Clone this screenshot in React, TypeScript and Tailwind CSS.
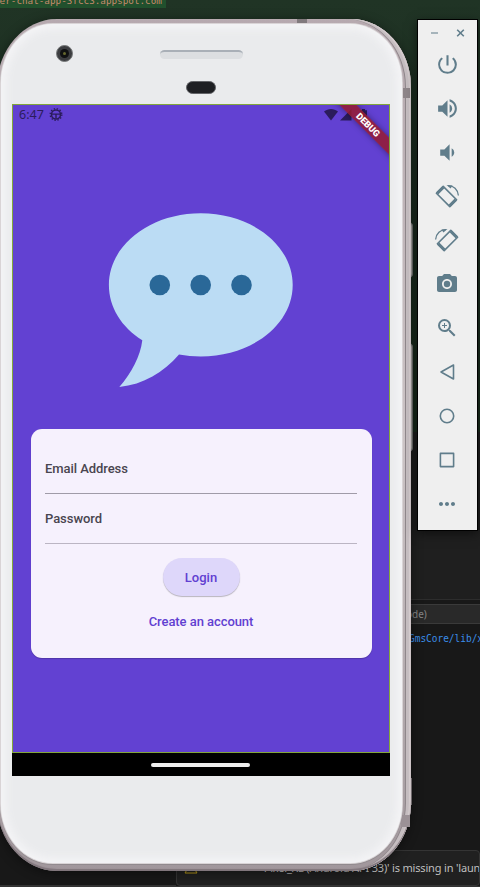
import React from "react";
import {
  MdPowerSettingsNew,
  MdVolumeUp,
  MdVolumeDown,
  MdPhotoCamera,
  MdZoomIn,
  MdMoreHoriz,
} from "react-icons/md";

function RotateIcon({ flip = false }: { flip?: boolean }) {
  return (
    <svg width="26" height="26" viewBox="-1 -1 26 26" className={flip ? "-scale-x-100" : ""}>
      <g fill="none" stroke="currentColor">
        <path d="M8.2 2.4 21.6 15.800 14.800 22.600 1.400 9.200z" strokeWidth="1.6" strokeLinejoin="round" />
        <path d="M2.200 9.400 8.400 3.200M14.600 21.800 20.800 15.600" strokeWidth="3" />
        <path d="M13 1.700C18.600 1.700 22.800 5.500 23.400 11.500" strokeWidth="1.300" />
      </g>
      <path d="M11.500.9 17.500 1.600 15.600 4.500z" fill="currentColor" />
    </svg>
  );
}

function NavShape({ d }: { d: string }) {
  return (
    <svg width="24" height="24" viewBox="0 0 24 24" fill="none" stroke="currentColor" strokeWidth="1.6" strokeLinejoin="round">
      <path d={d} />
    </svg>
  );
}

function Toolbar() {
  const tools = [
    <MdPowerSettingsNew size={25} />,
    <MdVolumeUp size={25} />,
    <MdVolumeDown size={25} />,
    <RotateIcon />,
    <RotateIcon flip />,
    <MdPhotoCamera size={24} />,
    <MdZoomIn size={24} />,
    <NavShape d="M18.500 5v14L6 12z" />,
    <NavShape d="M5.300 12a6.700 6.700 0 1 0 13.400 0a6.700 6.700 0 1 0-13.400 0z" />,
    <NavShape d="M5.400 5.400h13.200v13.200H5.400z" />,
    <MdMoreHoriz size={24} />,
  ];
  return (
    <aside className="absolute left-[417px] top-[19px] flex h-[512px] w-[61px] flex-col border border-black bg-[#efefef] pr-px text-[#607d8b] shadow-[0_3px_10px_rgba(0,0,0,0.5)]">
      <div className="flex h-[22px] items-end justify-center gap-[17px] pb-[3px]">
        <svg width="9" height="12" viewBox="0 0 9 12" className="opacity-60">
          <path d="M1 6h7" stroke="currentColor" strokeWidth="1.7" />
        </svg>
        <svg width="9" height="12" viewBox="0 0 9 12">
          <path d="m1.200 2.700 6.600 6.600M7.800 2.700 1.200 9.300" stroke="currentColor" strokeWidth="1.600" />
        </svg>
      </div>
      {tools.map((tool, i) => (
        <div key={i} className="flex h-11 shrink-0 items-center justify-center">
          {tool}
        </div>
      ))}
    </aside>
  );
}

function StatusBar() {
  return (
    <div className="flex h-[20px] items-center justify-between pl-[6px] pr-[20px] text-[#2b1c5c]">
      <div className="flex items-center gap-[5px]">
        <span className="font-['Noto_Sans',sans-serif] text-[12.5px] leading-[16px]">6:47</span>
        <svg width="14" height="14" viewBox="0 0 14 14" fill="none" stroke="currentColor">
          <circle cx="7" cy="6.500" r="4.500" strokeWidth="1.500" />
          <circle cx="7" cy="6.500" r="5.800" strokeWidth="1.400" strokeDasharray="1.4 1.637" />
          <path d="M2.700 6.100h8.600M7 6.500v4" strokeWidth="1.400" />
        </svg>
      </div>
      <div className="flex items-center gap-[2px]">
        <svg width="14" height="12" viewBox="0 0 14 12" fill="currentColor">
          <path d="M0 2.600C4-.8 10-.8 14 2.600L7 11.400z" />
        </svg>
        <svg width="12" height="12" viewBox="0 0 12 12" fill="currentColor">
          <path d="M11.500 0v11.500H0z" />
        </svg>
        <svg width="15" height="12" viewBox="0 0 15 12" fill="currentColor">
          <path d="M6 1.200h2V0h3v1.200h2V12H6z" />
        </svg>
      </div>
    </div>
  );
}

function Field({ label, line }: { label: string; line: string }) {
  return (
    <div className={`flex h-[50.5px] items-start border-b ${line}`}>
      <span className="pt-[16.5px] text-[13px] font-medium leading-[18px] tracking-[-0.06px] text-[#49454f]">{label}</span>
    </div>
  );
}

function ChatBubble() {
  return (
    <svg width="186" height="176" viewBox="108 212 186 176" className="mt-[87px] shrink-0">
      <path
        d="M200.8 213.3C251.7 213.3 292.7 245.3 292.7 284.9C292.7 324.5 251.7 356.4 200.8 356.4C193.2 356.4 186 355.8 179 354.5C163.5 372.5 143.5 384.5 119.3 387C131.5 373 140.5 356 142.3 340.2C121.5 327 108.9 307.2 108.9 284.9C108.9 245.3 150 213.3 200.8 213.3Z"
        fill="#bbdcf4"
      />
      <g fill="#2a6898">
        <circle cx="159.8" cy="285" r="10.3" />
        <circle cx="200.7" cy="285" r="10.3" />
        <circle cx="241.5" cy="285" r="10.3" />
      </g>
    </svg>
  );
}

function Screen() {
  return (
    <div className="relative flex h-[649px] w-[378px] flex-col overflow-hidden border border-[#83a63c] bg-[#6241d2] font-['Roboto',sans-serif]">
      <StatusBar />
      <div className="flex flex-col items-center">
        <ChatBubble />
        <form className="mt-[41px] flex h-[228.5px] w-[341px] flex-col rounded-[11px] bg-[#f6f1fd] px-[14.5px] pt-[14px] shadow-[0_1px_1px_rgba(0,0,0,0.2)]">
          <Field label="Email Address" line="border-[#a09ba8]" />
          <Field label="Password" line="border-[#bbb5c3]" />
          <div className="mt-[14px] flex flex-col items-center">
            <button type="button" className="h-[38px] w-[77px] rounded-full bg-[#ded7fa] pt-px text-[13px] font-medium text-[#6140d1] shadow-[0_1px_1px_rgba(0,0,0,0.25)]">
              Login
            </button>
            <button type="button" className="mt-[16.5px] text-[13px] font-medium leading-[18px] tracking-[-0.06px] text-[#6140d1]">
              Create an account
            </button>
          </div>
        </form>
      </div>
      <div className="absolute -right-[34px] top-[14px] flex h-[12px] w-[110px] rotate-45 items-center justify-center bg-[#961b30]/85 text-[9.2px] font-black text-white shadow-[0_0_6px_rgba(0,0,0,0.4)]">
        DEBUG
      </div>
    </div>
  );
}

function Phone() {
  return (
    <div className="absolute -left-[3px] top-[19px] h-[852px] w-[414px]">
      <div className="absolute right-[-2px] top-[203px] h-[56px] w-[5px] rounded-r border border-[#777] bg-[#b9b7b4]" />
      <div className="absolute right-[-2px] top-[324px] h-[109px] w-[5px] rounded-r border border-[#777] bg-[#b9b7b4]" />
      <div className="absolute right-[-1px] top-[759px] h-[27px] w-[3px] bg-[#8c8589]" />
      <div className="relative h-full rounded-[60px/68px] bg-linear-to-b from-[#b6a9af] via-[#cdc5c7] to-[#a1979c] pb-[8px] pl-[4px] pr-[9px] pt-[5px] shadow-[0_2px_12px_rgba(0,0,0,0.45),inset_0_-2px_1px_#81767c,inset_-2px_0_1px_#d5cdcf,inset_-5px_0_0_#c5bdc0,inset_-6px_0_0_#8f878b]">
        <div className="absolute left-[300px] top-0 h-[5px] w-[10px] bg-[#817a7d]" />
        <div className="absolute right-px top-[69px] h-[10px] w-[8px] bg-[#8e8589]" />
        <div className="absolute right-px top-[796px] h-[12px] w-[9px] bg-[#9b9196]" />
        <div className="relative flex h-full flex-col items-start rounded-[52px/59px] bg-[#eaebed] pl-[11px] shadow-[inset_0_0_9px_5px_#f4f4f6,0_0_0_1px_#d9d4d6,0_1px_0_1px_#918a8e]">
          <div className="flex h-[80px] w-[378px] shrink-0 items-start">
            <div className="ml-[44px] mt-[21px] flex size-[17px] items-center justify-center rounded-full border border-[#77797a] bg-[#3c3d40]">
              <div className="flex size-[9px] items-center justify-center rounded-full bg-[#101112]">
                <div className="size-[3px] rounded-full bg-[#66682f]" />
              </div>
            </div>
            <div className="ml-[87px] mt-[26px] flex w-[83px] flex-col">
              <div className="h-[9px] w-full rounded-full border-t-2 border-[#a9afb7] bg-[#dcdee1]" />
              <div className="ml-[26px] mt-[22px] h-[13px] w-[30px] rounded-full border border-[#626367] bg-[#1e1f23]" />
            </div>
          </div>
          <Screen />
          <div className="flex h-[23px] w-[378px] items-center justify-center bg-black pr-px">
            <div className="h-[4px] w-[99px] rounded-full bg-[#eeeeee]" />
          </div>
        </div>
      </div>
    </div>
  );
}

function Editor() {
  return (
    <div className="flex h-full flex-col">
      <div className="h-[432px] shrink-0 bg-linear-to-b from-[#203425] via-[#1c2c20] to-[#192c1c]">
        <div className="h-[8px] w-[166px] overflow-hidden bg-[#21502d]">
          <div className="-mt-[5px] -ml-[6px] whitespace-nowrap font-['DejaVu_Sans_Mono',monospace] text-[9.3px] leading-[12px] text-[#c58b6c]">
            ter-chat-app-3fcc3.appspot.com
          </div>
        </div>
      </div>
      <div className="h-[168px] shrink-0 border-b border-[#2d2d2d] bg-[#1f1f1f]" />
      <div className="flex grow flex-col bg-[#181818]">
        <div className="mt-[4px] h-[20px] border-y border-[#3a3a3a] bg-[#292929] pl-[406px] font-['Noto_Sans',sans-serif] text-[10px] leading-[18px] text-[#858585]">
          ode)
        </div>
        <div className="mt-[7px] overflow-hidden whitespace-nowrap pl-[409px] font-['DejaVu_Sans_Mono',monospace] text-[11px] leading-[16px] text-[#3b8eea]">
          <span className="inline-block origin-left scale-x-[0.86]">GmsCore/lib/x86</span>
        </div>
        <div className="mt-auto flex h-[37px] border-b border-[#333]">
          <div className="w-[176px] border-b border-[#333]" />
          <div className="flex grow items-center justify-end overflow-hidden rounded border border-[#343434] bg-[#202020]">
            <div className="-mr-[13px] flex w-[308px] items-center justify-between">
              <svg width="14" height="12" viewBox="0 0 14 12" fill="none" stroke="#b99a18">
                <path d="M7 1 13 11H1z" />
              </svg>
              <span className="whitespace-nowrap font-['Noto_Sans',sans-serif] text-[11px] tracking-[-0.17px] text-[#bfbfbf]">
                'Pixel_XL (Android API 33)' is missing in 'launch
              </span>
            </div>
          </div>
        </div>
      </div>
    </div>
  );
}

export default function App() {
  return (
    <main className="relative h-[887px] w-[480px] overflow-hidden bg-[#181818]">
      <Editor />
      <Phone />
      <Toolbar />
    </main>
  );
}
